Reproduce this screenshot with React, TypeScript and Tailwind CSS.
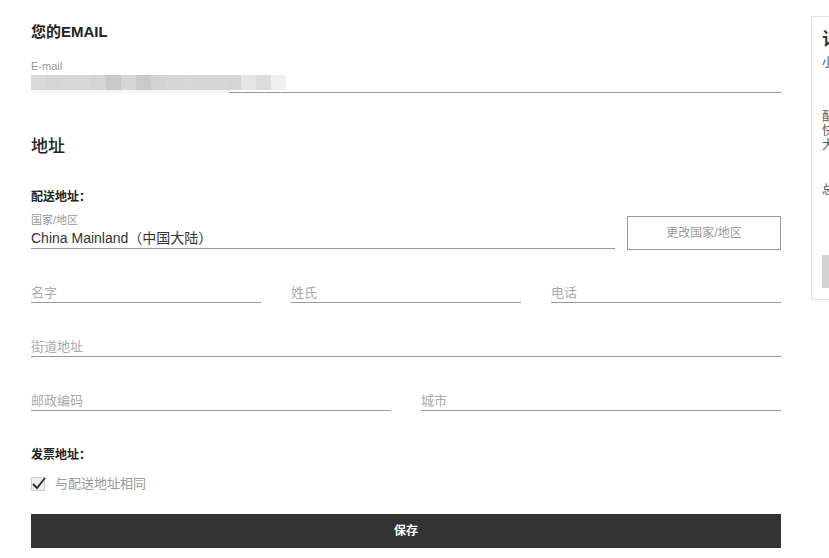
const font = { fontFamily: '"Liberation Sans", "Noto Sans CJK SC", sans-serif' };

const blurBlocks = [
  '#d9d9d9', '#d5d5d5', '#d7d7d7', '#d7d7d7', '#d4d4d4', '#c9c9c9', '#d6d6d6', '#cacaca',
  '#d3d3d3', '#d6d6d6', '#d7d7d7', '#d6d6d6', '#d6d6d6', '#d4d4d4', '#e5e5e5', '#dcdcdc', '#f0f0f0',
];

function Field({ label, className = '' }: { label: string; className?: string }) {
  return (
    <div className={`border-b border-[#999] ${className}`}>
      <div className="text-[13px] leading-[18px] text-[#aaa]">{label}</div>
    </div>
  );
}

function SummaryPanel() {
  return (
    <div className="mt-[16px] h-[284px] w-[260px] shrink-0 border border-[#e3e3e3] bg-white pl-[10px] text-[#555]">
      <div className="mt-[12px] text-[17px] leading-[22px] font-bold text-[#333]">订单摘要</div>
      <div className="mt-[3px] text-[12px] leading-[18px]">小计</div>
      <div className="mt-[38px] text-[12px] leading-[14px]">
        <div>配送</div>
        <div>快递</div>
        <div>大陆</div>
      </div>
      <div className="mt-[31px] text-[12px] leading-[14px]">总计</div>
      <div className="mt-[58px] h-[33px] w-[230px] bg-[#d3d3d3]" />
    </div>
  );
}

export default function App() {
  return (
    <div className="w-full h-[558px] overflow-hidden bg-white" style={font}>
      <div className="flex gap-[30px] pl-[31px]">
        <div className="w-[750px] shrink-0 flex flex-col">
          {/* Email */}
          <h2 className="pt-[22px] text-[15px] leading-[20px] font-bold text-[#222]">您的EMAIL</h2>
          <div className="mt-[17px] text-[11px] leading-[14px] text-[#999]">E-mail</div>
          <div className="mt-[2px] flex h-[15px]">
            {blurBlocks.map((c, i) => (
              <div key={i} className="h-full w-[15px]" style={{ backgroundColor: c }} />
            ))}
          </div>
          <div className="flex h-[3px] items-end">
            <div className="h-[3px] w-[198px] bg-[#f6f6f6]" />
            <div className="h-px flex-1 bg-[#999]" />
          </div>

          {/* Address */}
          <h2 className="mt-[42px] text-[17px] leading-[24px] font-medium text-[#222]">地址</h2>
          <div className="mt-[30px] text-[12px] leading-[16px] font-bold text-[#222]">配送地址：</div>

          <div className="mt-[8px] flex items-end gap-[12px]">
            <div className="flex-1 border-b border-[#999]">
              <div className="text-[11px] leading-[14px] text-[#999]">国家/地区</div>
              <div className="mt-[2px] text-[14px] leading-[19px] text-[#333]">China Mainland（中国大陆）</div>
            </div>
            <button className="mb-[-1px] h-[34px] w-[154px] border border-[#999] text-[12px] text-[#999]">
              更改国家/地区
            </button>
          </div>

          <div className="mt-[35px] grid grid-cols-3 gap-[30px]">
            <Field label="名字" />
            <Field label="姓氏" />
            <Field label="电话" />
          </div>

          <Field label="街道地址" className="mt-[35px]" />

          <div className="mt-[35px] grid grid-cols-2 gap-[30px]">
            <Field label="邮政编码" />
            <Field label="城市" />
          </div>

          {/* Billing */}
          <div className="mt-[36px] text-[12px] leading-[16px] font-bold text-[#222]">发票地址：</div>
          <label className="mt-[13px] flex items-center gap-[10px]">
            <span className="relative h-[14px] w-[14px] border border-[#ccc] bg-[#eee]">
              <svg viewBox="0 0 16 16" className="absolute left-[-1px] top-[-3px] h-[16px] w-[16px]">
                <path d="M2 9 L6 13 L14 3" fill="none" stroke="#333" strokeWidth="2" />
              </svg>
            </span>
            <span className="text-[13px] leading-[16px] text-[#999]">与配送地址相同</span>
          </label>

          <button className="mt-[22px] h-[34px] w-full bg-[#333] text-[12px] font-bold text-white">保存</button>
        </div>

        <SummaryPanel />
      </div>
    </div>
  );
}
